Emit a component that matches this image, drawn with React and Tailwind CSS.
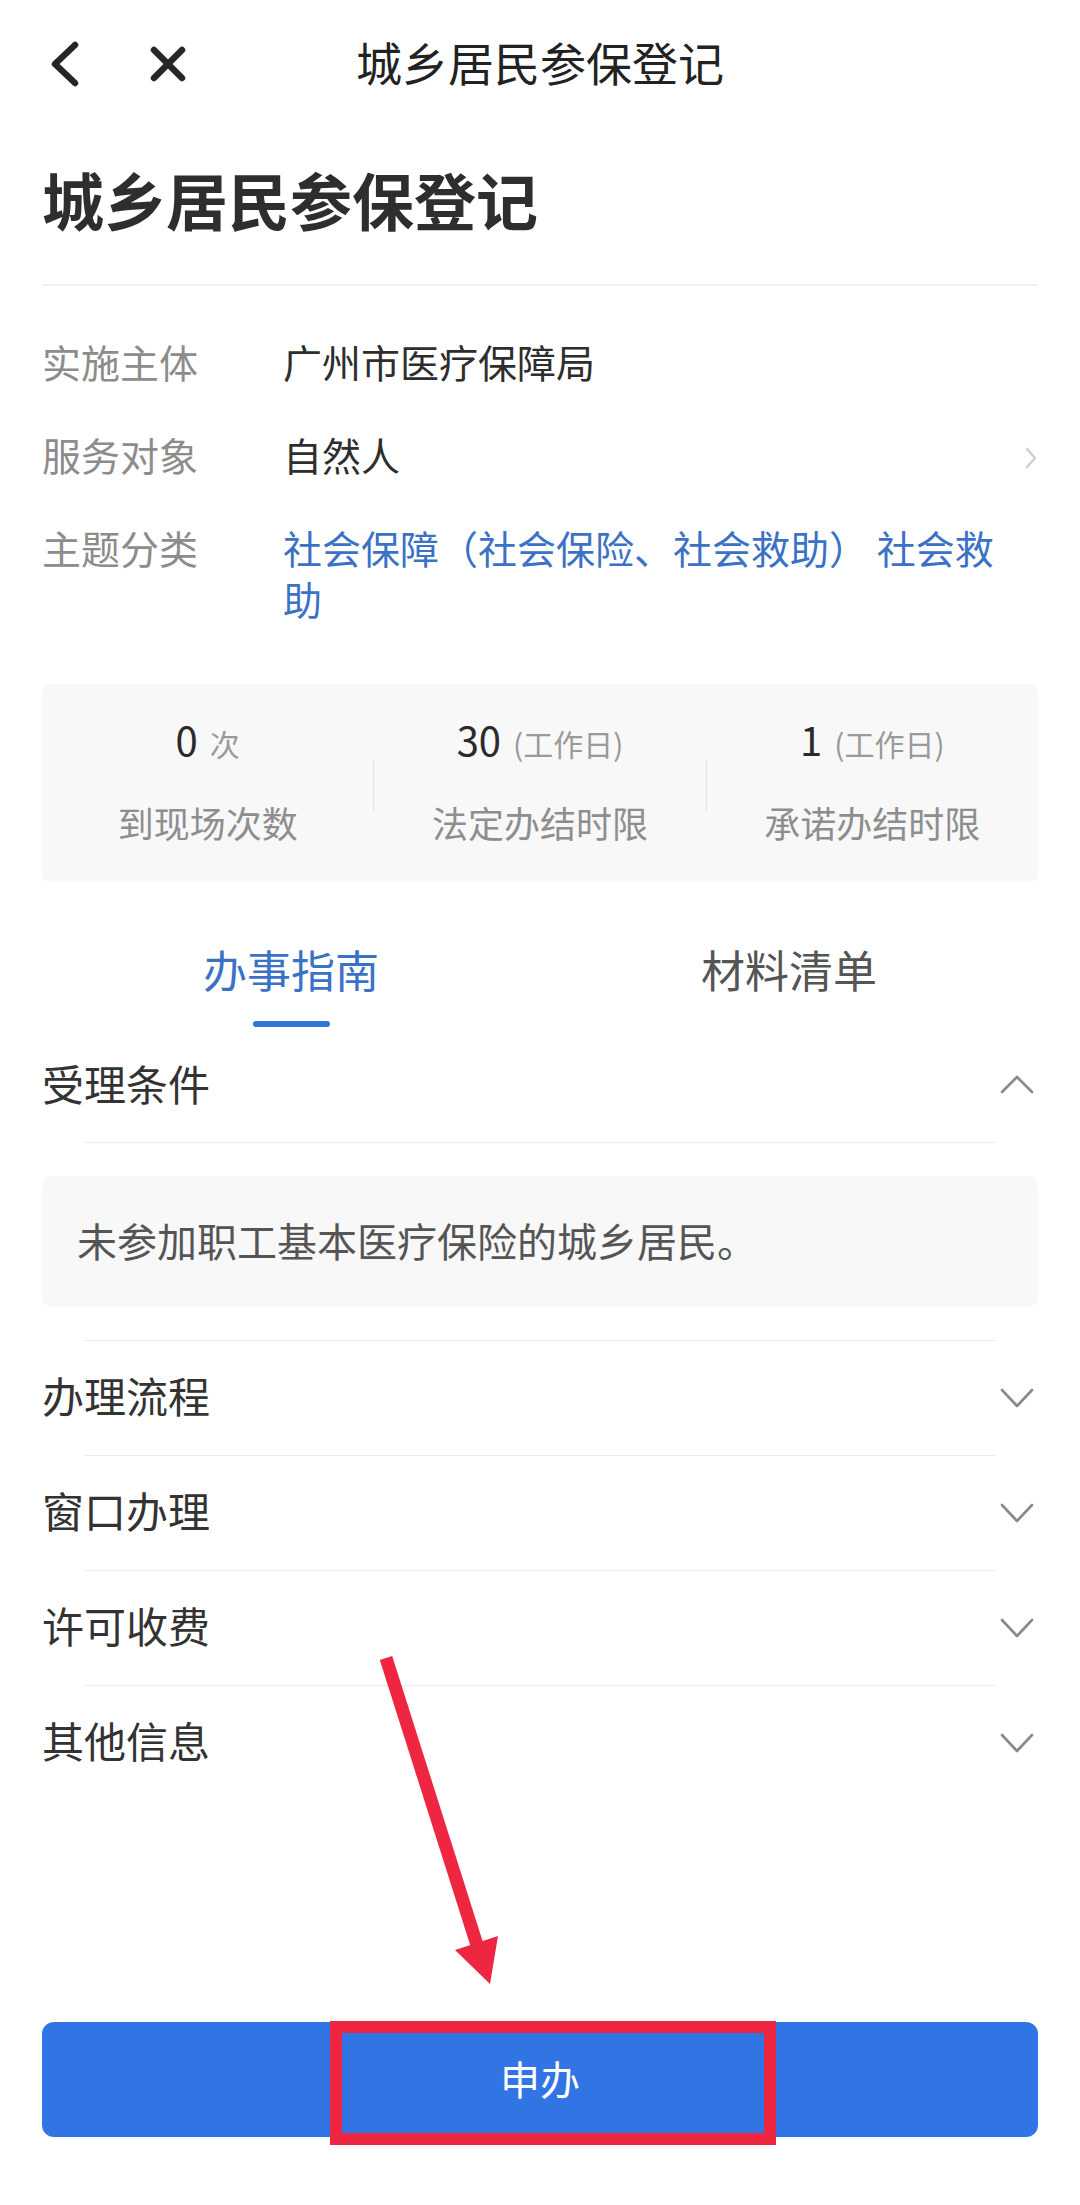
import React from "react";

const font = { fontFamily: '"Noto Sans CJK SC", "Noto Sans", sans-serif' };

function ChevronDown() {
  return (
    <svg width="34" height="20" viewBox="0 0 34 20" className="shrink-0">
      <polyline points="2,2 17,18 32,2" fill="none" stroke="#8a8a8a" strokeWidth="2.6" strokeLinecap="round" strokeLinejoin="round" />
    </svg>
  );
}

function ChevronUp() {
  return (
    <svg width="34" height="20" viewBox="0 0 34 20" className="shrink-0">
      <polyline points="2,17 17,2 32,17" fill="none" stroke="#8a8a8a" strokeWidth="2.6" strokeLinecap="round" strokeLinejoin="round" />
    </svg>
  );
}

function Stat({ num, unit, label }) {
  return (
    <div className="flex-1 flex flex-col items-center">
      <div className="flex items-baseline h-[48px] leading-[48px]">
        <span className="text-[40px] text-[#2b2b2b]">{num}</span>
        <span className="text-[30px] text-[#9a9a9a] ml-[12px]">{unit}</span>
      </div>
      <div className="mt-[37px] text-[36px] leading-[44px] text-[#8e8e8e]">{label}</div>
    </div>
  );
}

function AccRow({ title, open }) {
  return (
    <div className="h-[114px] px-[42px] flex items-center justify-between">
      <span className="text-[42px] text-[#333333] pb-[7px]">{title}</span>
      <span className="pr-[4px]">{open ? <ChevronUp /> : <ChevronDown />}</span>
    </div>
  );
}

function Divider() {
  return <div className="mx-[84px] h-px bg-[#ececec]" />;
}

export default function App() {
  return (
    <div className="relative w-[1080px] min-h-[2205px] bg-white flex flex-col" style={font}>
      {/* Header */}
      <div className="h-[130px] grid grid-cols-[1fr_auto_1fr] items-center">
        <div className="flex items-center pl-[45px]">
          <svg width="40" height="50" viewBox="0 0 40 50">
            <polyline points="30,5 10,24 30,43" fill="none" stroke="#262626" strokeWidth="6.5" strokeLinecap="round" strokeLinejoin="round" />
          </svg>
          <svg width="46" height="50" viewBox="0 0 46 50" className="ml-[60px]">
            <line x1="9" y1="10" x2="37" y2="38" stroke="#262626" strokeWidth="6.5" strokeLinecap="round" />
            <line x1="37" y1="10" x2="9" y2="38" stroke="#262626" strokeWidth="6.5" strokeLinecap="round" />
          </svg>
        </div>
        <div className="text-[46px] text-[#222222] leading-none pb-[8px]">城乡居民参保登记</div>
        <div />
      </div>

      {/* Big title */}
      <div className="mx-[42px] pt-[32px] pb-[48px] border-b-2 border-[#f0f0f0]">
        <h1 className="text-[62px] leading-[74px] font-bold text-[#2e2e2e]">城乡居民参保登记</h1>
      </div>

      {/* Info rows */}
      <div className="px-[42px] pt-[50px] flex flex-col gap-[42px] text-[39px] leading-[51px]">
        <div className="flex">
          <div className="w-[241px] shrink-0 text-[#8c8c8c]">实施主体</div>
          <div className="flex-1 text-[#2e2e2e]">广州市医疗保障局</div>
        </div>
        <div className="flex items-center">
          <div className="w-[241px] shrink-0 text-[#8c8c8c]">服务对象</div>
          <div className="flex-1 text-[#2e2e2e]">自然人</div>
          <svg width="14" height="24" viewBox="0 0 14 24" className="shrink-0 mt-[6px]">
            <polyline points="3,3 11,12 3,21" fill="none" stroke="#cfcfcf" strokeWidth="2.6" strokeLinecap="round" strokeLinejoin="round" />
          </svg>
        </div>
        <div className="flex">
          <div className="w-[241px] shrink-0 text-[#8c8c8c]">主题分类</div>
          <div className="w-[730px] text-[#3b72c6]">社会保障（社会保险、社会救助） 社会救助</div>
        </div>
      </div>

      {/* Stats */}
      <div className="mx-[42px] mt-[60px] h-[198px] bg-[#f8f8f8] rounded-[8px] flex items-start pt-[31px]">
        <Stat num="0" unit="次" label="到现场次数" />
        <div className="w-px h-[52px] bg-[#e2e2e2] mt-[44px]" />
        <Stat num="30" unit="(工作日)" label="法定办结时限" />
        <div className="w-px h-[52px] bg-[#e2e2e2] mt-[44px]" />
        <Stat num="1" unit="(工作日)" label="承诺办结时限" />
      </div>

      {/* Tabs */}
      <div className="mx-[42px] mt-[57px] flex">
        <div className="flex-1 flex flex-col items-center">
          <span className="text-[44px] leading-[60px] text-[#3b72c6]">办事指南</span>
          <span className="mt-[22px] w-[77px] h-[6px] rounded-full bg-[#3473d8]" />
        </div>
        <div className="flex-1 flex flex-col items-center">
          <span className="text-[44px] leading-[60px] text-[#555555]">材料清单</span>
          <span className="mt-[22px] h-[6px]" />
        </div>
      </div>

      {/* Accordion */}
      <div className="flex flex-col">
        <div className="h-[115px] px-[42px] flex items-center justify-between">
          <span className="text-[42px] text-[#333333] pb-[5px]">受理条件</span>
          <span className="pr-[4px]"><ChevronUp /></span>
        </div>
        <Divider />
        <div className="mx-[42px] mt-[33px] mb-[33px] h-[131px] bg-[#f8f8f8] rounded-[10px] px-[35px] flex items-center">
          <span className="text-[40px] text-[#555555] pb-[4px]">未参加职工基本医疗保险的城乡居民。</span>
        </div>
        <Divider />
        <AccRow title="办理流程" />
        <Divider />
        <AccRow title="窗口办理" />
        <Divider />
        <AccRow title="许可收费" />
        <Divider />
        <AccRow title="其他信息" />
      </div>

      {/* Button */}
      <div className="mt-auto px-[42px] pb-[68px]">
        <button className="w-full h-[115px] rounded-[12px] bg-[#3175e4] text-white text-[40px] flex items-center justify-center pb-[4px]">
          申办
        </button>
      </div>

      {/* Red annotation overlay */}
      <svg className="absolute inset-0 pointer-events-none" width="1080" height="2205" viewBox="0 0 1080 2205">
        <rect x="336" y="2027" width="434" height="112" fill="none" stroke="#ee2642" strokeWidth="12" />
        <line x1="386" y1="1658" x2="477" y2="1945" stroke="#ee2642" strokeWidth="13" />
        <polygon points="455,1950 498,1936 490,1984" fill="#ee2642" />
      </svg>
    </div>
  );
}
